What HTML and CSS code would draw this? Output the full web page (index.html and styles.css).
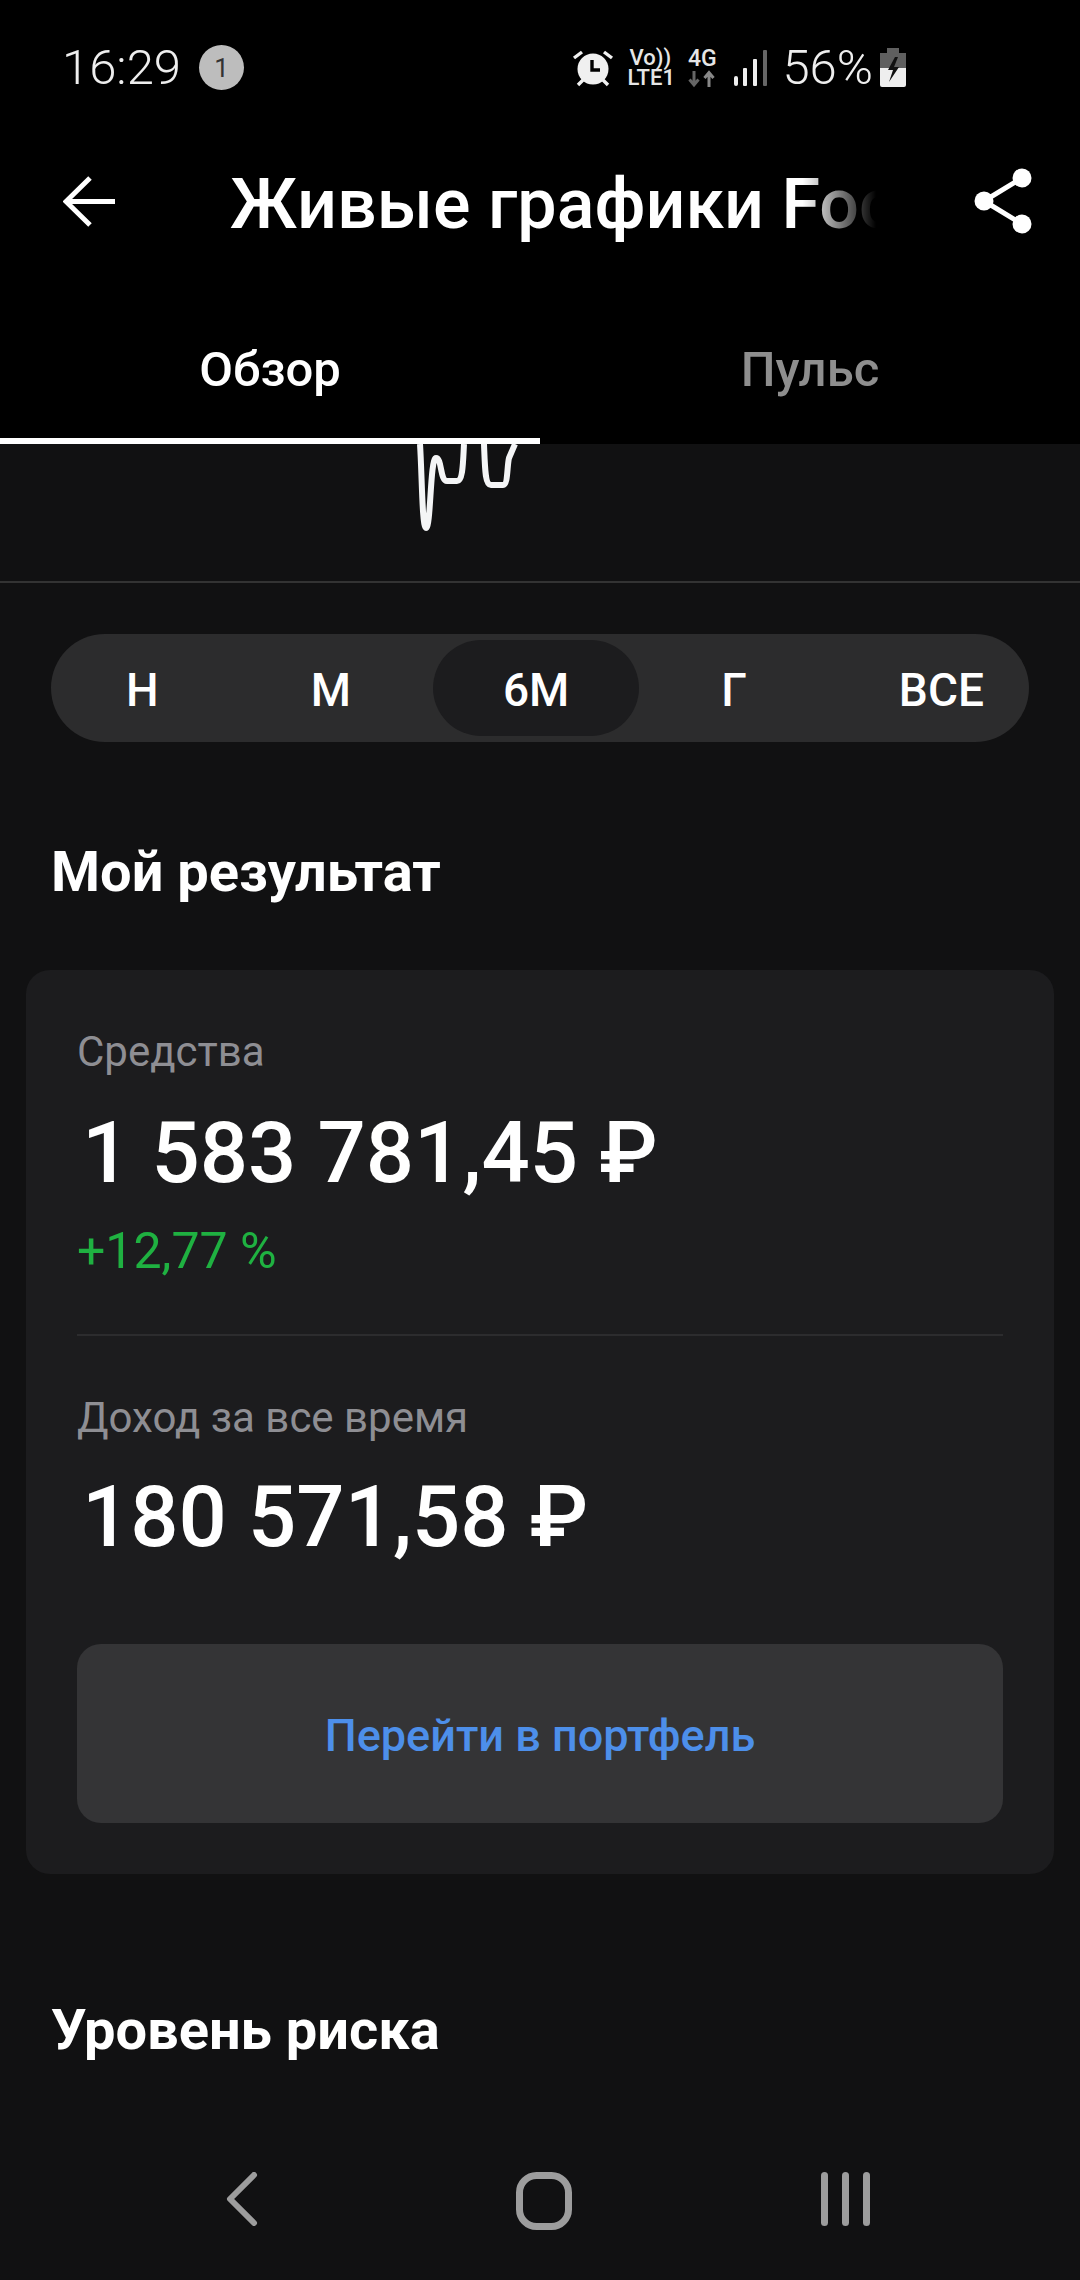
FILE: index.html
```html
<!DOCTYPE html>
<html lang="ru">
<head>
  <meta charset="UTF-8">
  <title>Живые графики</title>
  <link rel="stylesheet" href="styles.css">
</head>
<body>

<div class="top-bar">
  <div class="status-bar">
    <span class="status-time">16:29</span>
    <span class="status-badge">1</span>
    <div class="status-right">
      <svg class="alarm-icon" width="42" height="38" viewBox="0 0 42 38">
        <circle cx="21" cy="20" r="15.5" fill="#f0f0f0"/>
        <path d="M20 11v10h8" fill="none" stroke="#000" stroke-width="3.4"/>
        <path d="M2 9l8-6M40 9l-8-6M6 36l5-5M36 36l-5-5" fill="none" stroke="#f0f0f0" stroke-width="3.4"/>
      </svg>
      <div class="volte">Vo))<br>LTE1</div>
      <div class="net">
        <span class="net-label">4G</span>
        <svg width="28" height="18" viewBox="0 0 28 18">
          <path d="M6 1v13M1.500 9.500L6 15l4.500-5.500" fill="none" stroke="#666" stroke-width="3"/>
          <path d="M21 17V3M16.500 8L21 2.500 25.500 8" fill="none" stroke="#888" stroke-width="3"/>
        </svg>
      </div>
      <svg class="signal-icon" width="33" height="36" viewBox="0 0 33 36">
        <rect x="0" y="26" width="4" height="10" rx="2" fill="#eee"/>
        <rect x="9" y="18" width="4" height="18" rx="1" fill="#eee"/>
        <rect x="19" y="9" width="4" height="27" rx="1" fill="#eee"/>
        <rect x="29" y="0" width="4" height="36" rx="1" fill="#666"/>
      </svg>
      <span class="status-percent">56%</span>
      <svg class="battery-icon" width="26" height="39" viewBox="0 0 26 39">
        <path d="M7 0h12v5h7v18H0V5h7z" fill="#5f5f5f"/>
        <path d="M0 20h26v17a2 2 0 0 1-2 2H2a2 2 0 0 1-2-2z" fill="#eeeeee"/>
        <path d="M15 9l-7 13h5l-4 12 10-15h-5l4-10z" fill="#111"/>
      </svg>
    </div>
  </div>

  <div class="app-header">
    <svg class="back-arrow" width="53" height="53" viewBox="0 0 53 53">
      <path d="M3 26.500h49M27 3L3 26.500 27 50" fill="none" stroke="#fff" stroke-width="5"/>
    </svg>
    <div class="app-title">Живые графики Foc</div>
    <svg class="share-icon" width="58" height="66" viewBox="0 0 58 66">
      <path d="M48 10L10 33l38 23" fill="none" stroke="#fff" stroke-width="5"/>
      <circle cx="48" cy="10" r="9.500" fill="#fff"/>
      <circle cx="10" cy="33" r="9.500" fill="#fff"/>
      <circle cx="48" cy="56" r="9.500" fill="#fff"/>
    </svg>
  </div>

  <div class="tabs">
    <div class="tab tab-active">Обзор</div>
    <div class="tab">Пульс</div>
  </div>
</div>

<div class="content">
  <div class="chart-strip">
    <svg class="chart-line" width="110" height="90" viewBox="0 0 110 90">
      <path d="M3 0C5 30 5 84 9 84C14 84 13 14 19 14C25 14 23 37 30 37H40C46 37 46 18 47 0" fill="none" stroke="#f4f5f6" stroke-width="6"/>
      <path d="M67 0C68 25 68 41 74 41H86C91 41 90 22 92 14L98 0" fill="none" stroke="#f4f5f6" stroke-width="6"/>
    </svg>
  </div>

  <div class="range-pill">
    <div class="range-item">Н</div>
    <div class="range-item">М</div>
    <div class="range-item range-active">6М</div>
    <div class="range-item">Г</div>
    <div class="range-item range-last">ВСЕ</div>
  </div>

  <h2 class="section-title">Мой результат</h2>

  <div class="result-card">
    <div class="card-label">Средства</div>
    <div class="card-value">1 583 781,45 ₽</div>
    <div class="card-change">+12,77 %</div>
    <div class="card-divider"></div>
    <div class="card-label">Доход за все время</div>
    <div class="card-value card-income">180 571,58 ₽</div>
    <div class="card-button">Перейти в портфель</div>
  </div>

  <h2 class="section-title section-risk">Уровень риска</h2>
</div>

<div class="nav-bar">
  <svg width="32" height="54" viewBox="0 0 32 54">
    <path d="M28 3L4 27l24 24" fill="none" stroke="#9d9d9d" stroke-width="6" stroke-linecap="round" stroke-linejoin="round"/>
  </svg>
  <svg class="nav-home" width="56" height="58" viewBox="0 0 56 58">
    <rect x="3.500" y="3.500" width="49" height="51" rx="17" fill="none" stroke="#9d9d9d" stroke-width="7"/>
  </svg>
  <svg width="50" height="54" viewBox="0 0 50 54">
    <rect x="0" y="0" width="7" height="54" rx="3.500" fill="#9d9d9d"/>
    <rect x="21" y="0" width="7" height="54" rx="3.500" fill="#9d9d9d"/>
    <rect x="42" y="0" width="7" height="54" rx="3.500" fill="#9d9d9d"/>
  </svg>
</div>

</body>
</html>
```

FILE: styles.css
```css
* {
  box-sizing: border-box;
}

body {
  margin: 0;
  width: 1080px;
  height: 2280px;
  overflow: hidden;
  display: flex;
  flex-direction: column;
  background: #111112;
  color: #fff;
  font-family: Roboto, "Noto Sans", sans-serif;
}

.top-bar {
  background: #000;
  height: 444px;
}

.status-bar {
  height: 111px;
  padding: 24px 174px 0 62px;
  display: flex;
  align-items: center;
}

.status-time {
  font-size: 49px;
  font-weight: 300;
  color: #eee;
}

.status-badge {
  width: 45px;
  height: 45px;
  margin-left: 18px;
  border-radius: 50%;
  background: #bdbdbd;
  color: #333;
  font-size: 26px;
  display: flex;
  align-items: center;
  justify-content: center;
}

.status-right {
  margin-left: auto;
  display: flex;
  align-items: center;
}

.alarm-icon {
  margin-right: 13px;
}

.volte {
  width: 46px;
  text-align: center;
  color: #e6e6e6;
  font-size: 22px;
  font-weight: 500;
  line-height: 20px;
}

.net {
  width: 28px;
  margin-left: 15px;
  display: flex;
  flex-direction: column;
  align-items: center;
  color: #e6e6e6;
}

.net-label {
  font-size: 23px;
  font-weight: 500;
  line-height: 22px;
}

.signal-icon {
  margin-left: 18px;
}

.status-percent {
  margin-left: 15px;
  font-size: 49px;
  font-weight: 300;
  color: #eee;
}

.battery-icon {
  margin-left: 7px;
}

.app-header {
  height: 180px;
  padding: 0 48px 0 63px;
  display: flex;
  align-items: center;
}

.app-title {
  margin: 6px 0 0 114px;
  white-space: nowrap;
  font-size: 70px;
  font-weight: 500;
  -webkit-mask-image: linear-gradient(to right, #000 86%, transparent 97%);
  mask-image: linear-gradient(to right, #000 86%, transparent 97%);
}

.share-icon {
  margin-left: auto;
}

.tabs {
  height: 153px;
  display: flex;
}

.tab {
  flex: 1;
  padding-top: 50px;
  text-align: center;
  font-size: 49px;
  font-weight: 500;
  color: #8e8e8e;
}

.tab-active {
  color: #fff;
  border-bottom: 6px solid #fff;
}

.content {
  flex: 1;
}

.chart-strip {
  height: 139px;
  padding-left: 417px;
  border-bottom: 2px solid #333;
}

.chart-line {
  display: block;
}

.range-pill {
  width: 978px;
  height: 108px;
  margin: 51px 0 0 51px;
  padding: 6px 44px 6px 5px;
  border-radius: 54px;
  background: #2c2c2d;
  display: flex;
}

.range-item {
  padding: 4px 70px 0;
  margin-right: 12px;
  border-radius: 48px;
  font-size: 46px;
  font-weight: 500;
  display: flex;
  align-items: center;
}

.range-active {
  background: #1c1c1e;
}

.range-last {
  padding-right: 0;
  margin-right: 0;
}

.section-title {
  margin: 94px 0 0 51px;
  font-size: 56px;
  line-height: 72px;
  font-weight: 700;
}

.result-card {
  width: 1028px;
  height: 904px;
  margin: 62px 0 0 26px;
  padding: 58px 51px 0;
  border-radius: 24px;
  background: #1c1c1e;
}

.card-label {
  font-size: 42px;
  line-height: 48px;
  color: #8e8e93;
}

.card-value {
  margin: 27px 0 0 5px;
  font-size: 85px;
  line-height: 100px;
  font-weight: 500;
}

.card-income {
  margin-top: 25px;
}

.card-change {
  margin-top: 20px;
  font-size: 50px;
  line-height: 56px;
  color: #1fb141;
}

.card-divider {
  height: 2px;
  margin: 55px 0 58px;
  background: #2c2c2e;
}

.card-button {
  height: 179px;
  margin-top: 77px;
  padding-top: 4px;
  border-radius: 24px;
  background: #343436;
  color: #4d8fea;
  font-size: 45px;
  font-weight: 500;
  display: flex;
  align-items: center;
  justify-content: center;
}

.section-risk {
  margin-top: 120px;
}

.nav-bar {
  height: 170px;
  padding: 62px 209px 0 226px;
  display: flex;
  align-items: flex-start;
  justify-content: space-between;
}

.nav-home {
  margin-left: 8px;
}
```
